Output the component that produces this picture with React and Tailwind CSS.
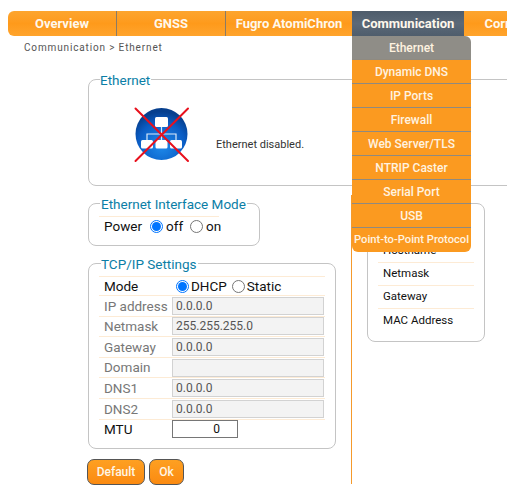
import React from 'react';

const navItems = [
  { label: 'Overview', width: 'w-[109px]' },
  { label: 'GNSS', width: 'w-[109px]' },
  { label: 'Fugro AtomiChron', width: 'w-[126px]' },
  { label: 'Communication', width: 'w-[112px]', active: true },
  { label: 'Corrections', width: 'w-[109px]' },
];

const subItems = ['Ethernet', 'Dynamic DNS', 'IP Ports', 'Firewall', 'Web Server/TLS', 'NTRIP Caster', 'Serial Port', 'USB', 'Point-to-Point Protocol'];

const tcpRows = [
  { label: 'IP address', value: '0.0.0.0' },
  { label: 'Netmask', value: '255.255.255.0' },
  { label: 'Gateway', value: '0.0.0.0' },
  { label: 'Domain', value: '' },
  { label: 'DNS1', value: '0.0.0.0' },
  { label: 'DNS2', value: '0.0.0.0' },
];

const statusRows = ['Hostname', 'Netmask', 'Gateway', 'MAC Address'];

const Radio = ({ on }) => (
  <span className={`inline-flex h-[13px] w-[13px] shrink-0 items-center justify-center rounded-full border bg-white ${on ? 'border-[#0075ff]' : 'border-[#767676]'}`}>
    {on && <span className="h-[9px] w-[9px] rounded-full bg-[#0075ff]" />}
  </span>
);

const EthernetIcon = () => (
  <svg width="56" height="56" viewBox="0 0 56 56" className="shrink-0">
    <defs>
      <radialGradient id="disc" cx="50%" cy="72%" r="65%">
        <stop offset="0%" stopColor="#1f8cec" />
        <stop offset="70%" stopColor="#0a5cc4" />
        <stop offset="100%" stopColor="#063f8e" />
      </radialGradient>
    </defs>
    <circle cx="27.5" cy="27" r="26" fill="url(#disc)" />
    <path d="M27.5 20V27M13 33V27H42V33M27.5 27V33" stroke="#dbe9fa" strokeWidth="1.2" fill="none" />
    <rect x="21" y="10" width="13" height="10" rx="1.5" fill="#fff" />
    <rect x="7" y="33" width="12" height="8.5" rx="1.5" fill="#fff" />
    <rect x="21.5" y="33" width="12" height="8.5" rx="1.5" fill="#fff" />
    <rect x="36" y="33" width="12" height="8.5" rx="1.5" fill="#fff" />
    <path d="M1.5 1.5L54 54M54 1.5L1.5 54" stroke="#e8101c" strokeWidth="2" strokeLinecap="round" />
  </svg>
);

const Box = ({ title, className, legendClass, children }) => (
  <fieldset className={`rounded-[8px] border border-[#c4c4c4] ${className}`}>
    <legend className={`whitespace-nowrap pt-[1px] text-[13.5px] leading-[16px] text-[#0b7ea6] ${legendClass}`}>{title}</legend>
    {children}
  </fieldset>
);

export default function App() {
  return (
    <div className="relative h-[501px] w-[507px] overflow-hidden bg-white font-['Roboto','Liberation_Sans',sans-serif]">
      {/* top menu */}
      <div className="absolute left-2 top-[11px] flex h-[25px] w-[600px] overflow-hidden rounded-l-[6px]">
        {navItems.map((item, i) => (
          <div
            key={item.label}
            className={`${item.width} flex shrink-0 items-center justify-center text-[13px] font-bold text-[#fff8ec] ${item.active ? 'bg-gradient-to-b from-[#4e5c6b] via-[#5b6978] to-[#4f5d6c]' : 'bg-gradient-to-b from-[#fda52e] via-[#fe9a1b] to-[#ffa42c]'} ${i < 2 ? 'border-r border-[#8a7b66]' : ''}`}
          >
            {item.label}
          </div>
        ))}
      </div>

      {/* dropdown */}
      <div className="absolute left-[352px] top-[36px] z-10 w-[119px] overflow-hidden rounded-[6px] rounded-tl-none">
        {subItems.map((s, i) => (
          <div
            key={s}
            className={`flex h-[24px] items-center justify-center whitespace-nowrap font-medium text-[#fff3e0] ${i === 8 ? 'text-[11.2px]' : 'text-[12px]'} ${i === 0 ? 'bg-[#8f8d87]' : 'bg-[#fb9a20]'} ${i < subItems.length - 1 ? 'border-b border-[#8f8a80]' : ''}`}
          >
            {s}
          </div>
        ))}
      </div>

      <div className="pt-[41px]">
        <div className="pl-6 text-[10px] leading-[13px] tracking-[0.85px] text-[#555]">Communication &gt; Ethernet</div>

        <div className="pl-[88px] pt-[17px]">
          <Box title="Ethernet" className="h-[115px] w-[440px] pl-[10px]" legendClass="ml-[1px] pr-[1px]">
            <div className="flex pl-[35px] pt-[19px]">
              <EthernetIcon />
              <span className="ml-[26px] mt-[31px] text-[11px] leading-[14px] text-[#333]">Ethernet disabled.</span>
            </div>
          </Box>

          <div className="flex">
            <div className="w-[263px] pt-[9px]">
              <Box title="Ethernet Interface Mode" className="h-[51px] w-[172px] pl-[10px]" legendClass="ml-[1px] px-[1px]">
                <div className="mt-[4px] flex h-[20px] w-[120px] items-center gap-[5px] border-t border-[#fdebd5] pl-[5px] text-[13.5px] leading-none text-[#111]">
                  <span className="mr-[3px]">Power</span>
                  <Radio on />
                  <span className="-ml-[2px]">off</span>
                  <span className="ml-[2px] inline-flex"><Radio /></span>
                  <span className="-ml-[2px]">on</span>
                </div>
              </Box>

              <Box title="TCP/IP Settings" className="mt-[9px] h-[194px] w-[248px] px-[10px]" legendClass="ml-[2px] pr-[1px]">
                <div className="mt-[4px] flex h-[20px] items-center border-y border-[#fdebd5] pl-[5px] text-[13.5px] text-[#111]">
                  <span className="w-[72px]">Mode</span>
                  <Radio on />
                  <span className="ml-[2px]">DHCP</span>
                  <span className="ml-[5px] inline-flex"><Radio /></span>
                  <span className="ml-[2px]">Static</span>
                </div>
                {tcpRows.map((row) => (
                  <div key={row.label} className="flex h-[20.6px] items-center border-b border-[#fdebd5] pl-[5px] text-[13.5px] text-[#777]">
                    <span className="w-[68px] shrink-0 whitespace-nowrap">{row.label}</span>
                    <input
                      readOnly
                      disabled
                      value={row.value}
                      className="h-[18px] w-[152px] border border-[#d2d2d2] bg-[#f3f3f3] px-[3px] text-[12px] text-[#555]"
                    />
                  </div>
                ))}
                <div className="flex h-[19px] items-center pl-[5px] text-[13.5px] text-[#111]">
                  <span className="w-[68px] shrink-0">MTU</span>
                  <input readOnly value="0" className="h-[18px] w-[66px] border border-[#767676] bg-white pr-[17px] text-right text-[12px] text-[#111]" />
                </div>
              </Box>

              <div className="-ml-[1px] mt-[10px] flex gap-[4px]">
                <button className="h-[26px] w-[58px] rounded-[7px] border border-[#555] bg-gradient-to-b from-[#fea021] to-[#fb8a10] text-[12px] font-medium text-[#fff6e6]">Default</button>
                <button className="h-[26px] w-[35px] rounded-[7px] border border-[#555] bg-gradient-to-b from-[#fea021] to-[#fb8a10] text-[12px] font-medium text-[#fff6e6]">Ok</button>
              </div>
            </div>

            <div className="mt-[9px] h-[289px] border-l border-[#f59a2c] pl-[15px]">
              <Box title="Ethernet Status" className="h-[147px] w-[118px] px-[10px]" legendClass="ml-[-1px]">
                <div className="pt-[28px]">
                  {statusRows.map((r, i) => (
                    <div key={r} className={`flex h-[23px] items-center pl-[5px] text-[11.5px] text-[#111] ${i < 3 ? 'border-b border-[#fdebd5]' : ''}`}>{r}</div>
                  ))}
                </div>
              </Box>
            </div>
          </div>
        </div>
      </div>
    </div>
  );
}
